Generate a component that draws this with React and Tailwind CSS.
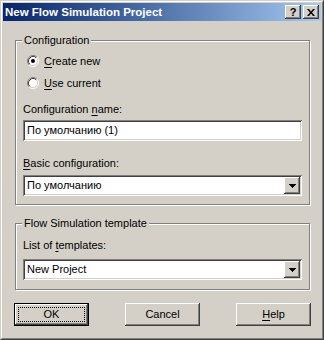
const FACE = 'bg-[#d4d0c8]'
const font = { fontFamily: '"Liberation Sans", Arial, sans-serif' }

const raised =
  'shadow-[inset_-1px_-1px_0_#404040,inset_1px_1px_0_#ffffff,inset_-2px_-2px_0_#808080,inset_2px_2px_0_#d4d0c8]'
const sunken =
  'shadow-[inset_1px_1px_0_#808080,inset_-1px_-1px_0_#ffffff,inset_2px_2px_0_#404040,inset_-2px_-2px_0_#d4d0c8]'

function Radio({ checked }) {
  return (
    <svg width="12" height="12" viewBox="0 0 12 12" className="shrink-0">
      <circle cx="6" cy="6" r="4.5" fill="#fff" />
      <path d="M2.11 9.89 A5.5 5.5 0 0 1 9.89 2.11" stroke="#808080" fill="none" />
      <path d="M9.89 2.11 A5.5 5.5 0 0 1 2.11 9.89" stroke="#fff" fill="none" />
      <path d="M2.82 9.18 A4.5 4.5 0 0 1 9.18 2.82" stroke="#404040" fill="none" />
      <path d="M9.18 2.82 A4.5 4.5 0 0 1 2.82 9.18" stroke="#d4d0c8" fill="none" />
      {checked && <circle cx="6" cy="6" r="2" fill="#000" />}
    </svg>
  )
}

function U({ children }) {
  return <span className="underline underline-offset-[2px]">{children}</span>
}

function GroupBox({ title, className, children }) {
  return (
    <div
      className={`relative border border-[#808080] shadow-[inset_1px_1px_0_#ffffff,1px_1px_0_#ffffff] ${className}`}
    >
      <span className={`absolute -top-[8px] left-[6px] px-[2px] leading-[14px] ${FACE}`}>{title}</span>
      {children}
    </div>
  )
}

function TextBox({ value }) {
  return (
    <div className={`h-[21px] bg-white ${sunken} pl-[4px] flex items-center`}>
      <span className="leading-[13px]">{value}</span>
    </div>
  )
}

function Combo({ value }) {
  return (
    <div className={`h-[21px] bg-white ${sunken} flex items-center p-[2px]`}>
      <span className="flex-1 pl-[2px] leading-[13px]">{value}</span>
      <div className={`w-[16px] h-[17px] ${FACE} ${raised} flex items-center justify-center`}>
        <svg width="7" height="4" viewBox="0 0 7 4">
          <path d="M0 0h7v1h-1v1h-1v1h-1v1h-1v-1h-1v-1h-1v-1h-1z" fill="#000" />
        </svg>
      </div>
    </div>
  )
}

function Button({ children, isDefault }) {
  if (isDefault) {
    return (
      <div className="w-[75px] h-[23px] border border-black">
        <div className={`h-full ${FACE} ${raised} p-[3px]`}>
          <div className="h-full border border-dotted border-black flex items-center justify-center leading-[13px]">
            {children}
          </div>
        </div>
      </div>
    )
  }
  return (
    <div className={`w-[75px] h-[23px] ${FACE} ${raised} flex items-center justify-center leading-[13px]`}>
      {children}
    </div>
  )
}

export default function App() {
  return (
    <div
      style={font}
      className={`w-[324px] h-[340px] ${FACE} text-[11px] text-black border border-t-[#d4d0c8] border-l-[#d4d0c8] border-r-[#404040] border-b-[#404040]`}
    >
      <div className="h-full border border-t-white border-l-white border-r-[#808080] border-b-[#808080] p-px">
        {/* title bar */}
        <div className="h-[18px] bg-linear-to-r from-[#0a246a] to-[#a6caf0] flex items-center pl-[2px] pr-[2px]">
          <span className="flex-1 text-white font-bold text-[11.5px] leading-[14px]">New Flow Simulation Project</span>
          <div className={`w-[16px] h-[14px] ${FACE} ${raised} flex items-center justify-center font-bold text-[11px] leading-[10px]`}>
            ?
          </div>
          <div className={`ml-[2px] w-[16px] h-[14px] ${FACE} ${raised} flex items-center justify-center`}>
            <svg width="8" height="7" viewBox="0 0 8 7">
              <path d="M0 0h2l2 2.5L6 0h2L5 3.5 8 7H6L4 4.5 2 7H0l3-3.5z" fill="#000" />
            </svg>
          </div>
        </div>

        <div className="pl-[12px] pt-[19px]">
          <GroupBox title="Configuration" className="w-[295px] h-[165px] pt-[12px] px-[7px]">
            <div className="flex flex-col">
              <div className="flex items-center h-[16px] pl-[4px] gap-[5px]">
                <Radio checked />
                <span className="leading-[13px]"><U>C</U>reate new</span>
              </div>
              <div className="flex items-center h-[16px] mt-[6px] pl-[4px] gap-[5px]">
                <Radio />
                <span className="leading-[13px]"><U>U</U>se current</span>
              </div>
              <div className="mt-[11px] leading-[14px]">Configuration <U>n</U>ame:</div>
              <div className="mt-[4px] w-[279px]">
                <TextBox value="По умолчанию (1)" />
              </div>
              <div className="mt-[15px] leading-[14px]"><U>B</U>asic configuration:</div>
              <div className="mt-[5px] w-[279px]">
                <Combo value="По умолчанию" />
              </div>
            </div>
          </GroupBox>

          <GroupBox title="Flow Simulation template" className="mt-[18px] w-[295px] h-[67px] pt-[14px] px-[7px]">
            <div className="leading-[14px]">List of <U>t</U>emplates:</div>
            <div className="mt-[7px] w-[279px]">
              <Combo value="New Project" />
            </div>
          </GroupBox>
        </div>

        <div className="flex pl-[11px] pt-[13px] gap-[36px]">
          <Button isDefault>OK</Button>
          <Button>Cancel</Button>
          <Button><U>H</U>elp</Button>
        </div>
      </div>
    </div>
  )
}
